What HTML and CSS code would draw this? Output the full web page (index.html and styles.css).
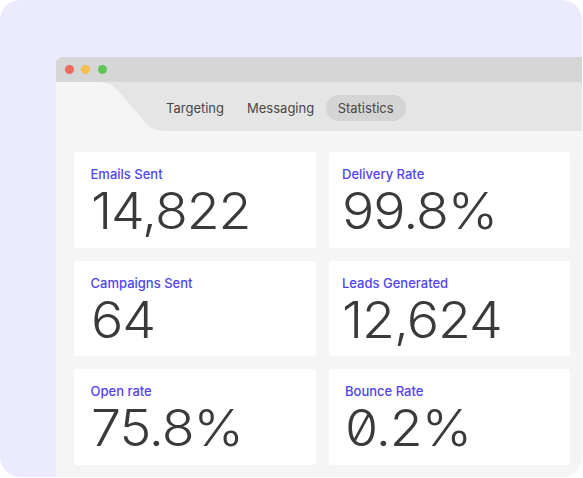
FILE: index.html
```html
<!DOCTYPE html>
<html>
<head>
<meta charset="utf-8">
<link rel="stylesheet" href="styles.css">
</head>
<body>
<div class="frame">
  <div class="window">
    <div class="titlebar">
      <span class="dot red"></span>
      <span class="dot yellow"></span>
      <span class="dot green"></span>
    </div>
    <div class="tabbar">
      <svg class="tabcurve" width="112" height="49" viewBox="0 0 112 49">
        <path d="M0,0 H42 C52,0 57,3 64,11 L88,39 C94,46 99,49 112,49 L0,49 Z" fill="#f5f5f5"/>
      </svg>
      <nav class="tabs">
        <span class="tab">Targeting</span>
        <span class="tab">Messaging</span>
        <span class="tab active">Statistics</span>
      </nav>
    </div>
    <div class="content">
      <div class="grid">
        <div class="card"><div class="label">Emails Sent</div><div class="value">14,822</div></div>
        <div class="card card-tight"><div class="label">Delivery Rate</div><div class="value">99.8%</div></div>
        <div class="card"><div class="label">Campaigns Sent</div><div class="value">64</div></div>
        <div class="card card-tight"><div class="label">Leads Generated</div><div class="value">12,624</div></div>
        <div class="card"><div class="label">Open rate</div><div class="value">75.8%</div></div>
        <div class="card"><div class="label">Bounce Rate</div><div class="value">0.2%</div></div>
      </div>
    </div>
  </div>
</div>
</body>
</html>
```

FILE: styles.css
```css
html, body {
  margin: 0;
  padding: 0;
  background: #ffffff;
}
body {
  font-family: Inter, "Liberation Sans", sans-serif;
}
.frame {
  width: 582px;
  height: 477px;
  border-radius: 20px;
  background: #ecebfe;
  overflow: hidden;
  box-sizing: border-box;
  padding: 57px 0 0 56px;
}
.window {
  width: 560px;
  height: 440px;
  background: #f5f5f5;
  border-radius: 6px 0 0 0;
  overflow: hidden;
}
.titlebar {
  height: 25px;
  background: #d6d6d6;
  display: flex;
  align-items: center;
  gap: 7.5px;
  padding-left: 8.5px;
}
.dot {
  width: 9px;
  height: 9px;
  border-radius: 50%;
  display: block;
}
.red { background: #ee6a5f; }
.yellow { background: #f5be4f; }
.green { background: #61c554; }
.tabbar {
  height: 49px;
  background: #e5e5e5;
  display: flex;
}
.tabcurve {
  display: block;
  flex: none;
}
.tabs {
  display: flex;
  align-items: flex-start;
  padding-top: 13px;
  margin-left: -13.5px;
}
.tab {
  height: 26px;
  line-height: 26px;
  padding: 0 11.5px;
  border-radius: 13px;
  font-size: 13px;
  color: #474747;
}
.tab.active {
  background: #d4d4d4;
  padding: 0 12px;
}
.content {
  padding: 21px 0 0 18px;
}
.grid {
  display: grid;
  grid-template-columns: 241.5px 241.5px;
  grid-auto-rows: 95.5px;
  gap: 13px;
}
.card {
  background: #ffffff;
  border-radius: 3px;
  padding: 14px 0 0 16.5px;
}
.card-tight {
  padding-left: 13.5px;
}
.label {
  font-size: 13px;
  line-height: 16px;
  font-weight: 500;
  color: #4f44f0;
}
.value {
  font-size: 50px;
  line-height: 54px;
  font-weight: 300;
  color: #3a3a3a;
  letter-spacing: -0.02em;
  font-feature-settings: "zero" 1;
  margin-top: 2px;
  transform: scaleX(1.075);
  transform-origin: 0 50%;
}
```
